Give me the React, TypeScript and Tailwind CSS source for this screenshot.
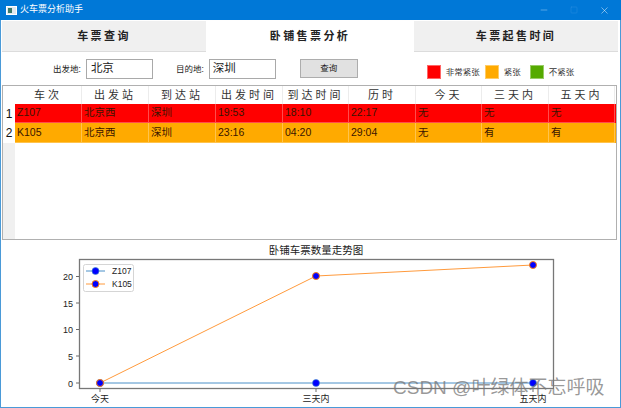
import { Minus, Square, X } from "lucide-react";

const COLS = ["车次", "出发站", "到达站", "出发时间", "到达时间", "历时", "今天", "三天内", "五天内"];
const ROWS = [
  { bg: "bg-[#ff0000] h-[19px]", cells: ["Z107", "北京西", "深圳", "19:53", "18:10", "22:17", "无", "无", "无"] },
  { bg: "bg-[#ffaa00] h-[20px]", cells: ["K105", "北京西", "深圳", "23:16", "04:20", "29:04", "无", "有", "有"] },
];
const WIDTHS = ["w-[67px]", "w-[67px]", "w-[67px]", "w-[67px]", "w-[66px]", "w-[67px]", "w-[66px]", "w-[67px]", "w-[66px]"];
const LEGEND = [
  { label: "非常紧张", color: "bg-[#ff0000]", gap: "w-[39px]" },
  { label: "紧张", color: "bg-[#ffaa00]", gap: "w-[26px]" },
  { label: "不紧张", color: "bg-[#55aa00]", gap: "w-[32px]" },
];
const TABS = ["车票查询", "卧铺售票分析", "车票起售时间"];

function Chart() {
  const font = "'Liberation Sans','Noto Sans CJK SC',sans-serif";
  return (
    <svg width="619" height="167" viewBox="0 0 619 167" className="block">
      <text x="315" y="14" textAnchor="middle" fontSize="10.5" fill="#222" fontFamily={font}>卧铺车票数量走势图</text>
      <rect x="78.5" y="19.5" width="474" height="129" fill="#fff" stroke="#777" strokeWidth="1.3" />
      {[
        [0, 143],
        [5, 116],
        [10, 89.5],
        [15, 63],
        [20, 36.5],
      ].map(([v, y]) => (
        <g key={v}>
          <line x1="75" x2="78" y1={y} y2={y} stroke="#444" strokeWidth="0.8" />
          <text x="72" y={y + 3.5} textAnchor="end" fontSize="9" fill="#222" fontFamily={font}>{v}</text>
        </g>
      ))}
      {[
        [99, "今天"],
        [315, "三天内"],
        [532, "五天内"],
      ].map(([x, t]) => (
        <g key={t}>
          <line x1={x} x2={x} y1="149" y2="152" stroke="#444" strokeWidth="0.8" />
          <text x={x} y="162" textAnchor="middle" fontSize="9" fill="#222" fontFamily={font}>{t}</text>
        </g>
      ))}
      <polyline points="99,143 315,143 532,143" fill="none" stroke="#4a90c8" strokeWidth="1" />
      <polyline points="99,143 315,36 532,25" fill="none" stroke="#ff9a3c" strokeWidth="1" />
      {[[99, 143], [315, 143], [532, 143]].map(([x, y]) => (
        <circle key={x} cx={x} cy={y} r="3.5" fill="#0000ff" stroke="#3f8fc8" strokeWidth="0.6" />
      ))}
      {[[99, 143], [315, 36], [532, 25]].map(([x, y]) => (
        <circle key={x} cx={x} cy={y} r="3.5" fill="#0000ff" stroke="#ff7f0e" strokeWidth="1" />
      ))}
      <rect x="82.5" y="24.5" width="50" height="27" rx="2" fill="#fff" stroke="#d5d5d5" />
      <line x1="85" x2="104" y1="31" y2="31" stroke="#4a90c8" />
      <circle cx="94.5" cy="31" r="3.5" fill="#0000ff" stroke="#3f8fc8" strokeWidth="0.6" />
      <text x="111" y="34" fontSize="8.5" fill="#222" fontFamily={font}>Z107</text>
      <line x1="85" x2="104" y1="44" y2="44" stroke="#ff9a3c" />
      <circle cx="94.5" cy="44" r="3.5" fill="#0000ff" stroke="#ff7f0e" />
      <text x="111" y="47" fontSize="8.5" fill="#222" fontFamily={font}>K105</text>
    </svg>
  );
}

export default function App() {
  return (
    <div className="relative flex h-[408px] w-[621px] flex-col overflow-hidden bg-white font-['Liberation_Sans','Noto_Sans_CJK_SC',sans-serif]">
      <header className="flex h-5 shrink-0 items-center bg-[#0078d7] pl-[6px] text-white">
        <span className="flex h-[9px] w-[11px] items-center border border-white bg-[#dfe8ee]">
          <span className="ml-[1px] h-[5px] w-[4px] bg-[#3c7a6a]" />
        </span>
        <span className="ml-[3px] text-[9px]">火车票分析助手</span>
        <div className="ml-auto flex items-center gap-[21px] pr-[11px]">
          <Minus size={10} strokeWidth={1} color="#cfe4f7" />
          <Square size={8} strokeWidth={1} color="#3f9ae6" />
          <X size={11} strokeWidth={1} />
        </div>
      </header>

      <main className="flex min-h-0 flex-1 flex-col border-x-[1px] border-b-[1px] border-[#4a9ad8]">
        <nav className="flex h-[32px] shrink-0 pl-[1px] pr-[2px]">
          {TABS.map((t, i) => (
            <div
              key={t}
              className={
                "flex items-center justify-center text-[11px] font-bold tracking-[2.4px] text-[#222] " +
                (i === 1
                  ? "w-[208px] bg-white"
                  : "mt-[1px] w-[204px] border-b border-[#dcdcdc] bg-[#f0f0f0]")
              }
            >
              {t}
            </div>
          ))}
        </nav>

        <div className="flex h-[33px] shrink-0 items-center">
          <span className="ml-[52px] pt-[2px] text-[8.5px] text-[#222]">出发地:</span>
          <span className="ml-[5px] flex h-[20px] w-[67px] items-start border border-[#a9a9a9] pl-[4px] text-[11.5px] leading-[16px] text-[#222]">北京</span>
          <span className="ml-[23px] pt-[2px] text-[8.5px] text-[#222]">目的地:</span>
          <span className="ml-[5px] flex h-[20px] w-[67px] items-start border border-[#a9a9a9] pl-[3px] text-[11.5px] leading-[16px] text-[#222]">深圳</span>
          <button className="ml-[24px] flex h-[19px] w-[58px] items-center justify-center border border-[#adadad] bg-[#e1e1e1] text-[8.5px] text-[#222]">查询</button>
          <div className="ml-[69px] mt-[7px] flex items-center">
            {LEGEND.map((l) => (
              <div key={l.label} className="flex items-center">
                <span className={"h-[14px] w-[14px] border border-white/40 " + l.color} />
                <span className={"ml-[5px] text-[8.5px] text-[#333] " + l.gap}>{l.label}</span>
              </div>
            ))}
          </div>
        </div>

        <section className="ml-[1px] mr-[3px] flex h-[155px] shrink-0 border border-[#b0b0b0]">
          <div className="flex w-[12px] shrink-0 flex-col bg-[#f0f0f0]">
            <div className="h-[18px] bg-white" />
            <div className="flex h-[19px] items-center justify-center bg-white text-[12px] text-[#111]">1</div>
            <div className="flex h-[20px] items-center justify-center bg-white text-[12px] text-[#111]">2</div>
          </div>
          <div className="flex min-w-0 flex-1 flex-col">
            <div className="flex h-[18px] shrink-0">
              {COLS.map((c, i) => (
                <div
                  key={c}
                  className={"flex items-center justify-center border-r border-[#ececec] text-[11px] tracking-[3px] text-[#333] " + WIDTHS[i]}
                >
                  {c}
                </div>
              ))}
            </div>
            {ROWS.map((r) => (
              <div key={r.cells[0]} className={"flex shrink-0 " + r.bg}>
                {r.cells.map((c, i) => (
                  <div
                    key={i}
                    className={"flex items-center border-r border-b border-white/30 pl-[2px] text-[10.5px] text-[#3a1500] " + WIDTHS[i]}
                  >
                    {c}
                  </div>
                ))}
              </div>
            ))}
          </div>
        </section>

        <Chart />
      </main>

      <span className="absolute left-[393px] top-[376px] whitespace-nowrap text-[19px] leading-[24px] text-[#777]/75">CSDN @叶绿体不忘呼吸</span>
    </div>
  );
}
